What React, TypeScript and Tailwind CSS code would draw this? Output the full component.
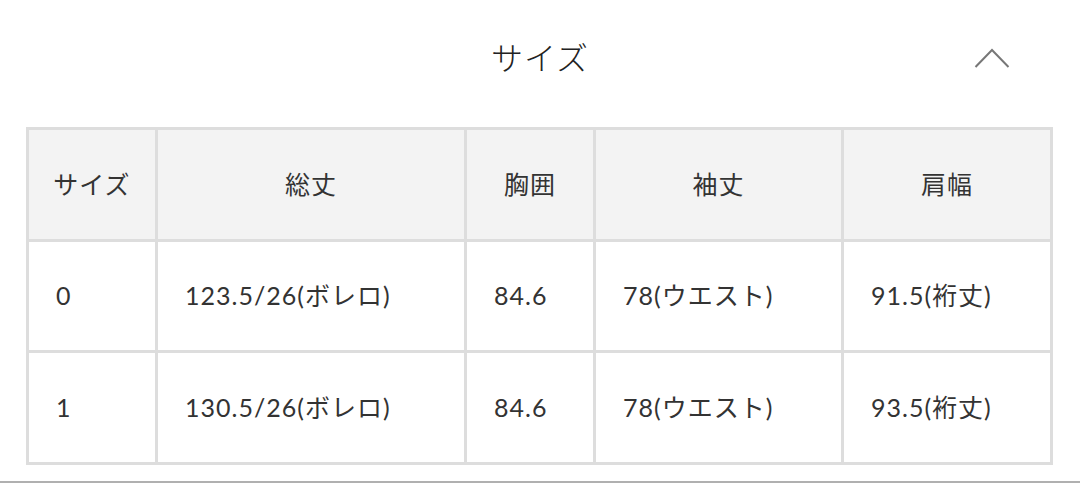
import React from "react";

const headers = ["サイズ", "総丈", "胸囲", "袖丈", "肩幅"];
const rows = [
  ["0", "123.5/26(ボレロ)", "84.6", "78(ウエスト)", "91.5(裄丈)"],
  ["1", "130.5/26(ボレロ)", "84.6", "78(ウエスト)", "93.5(裄丈)"],
];

export default function App() {
  return (
    <div
      className="w-[1080px] h-[483px] bg-white flex flex-col text-[#333]"
      style={{ fontFamily: 'Lato, "Noto Sans CJK JP", sans-serif' }}
    >
      <div className="grid grid-cols-[1fr_auto_1fr] items-center h-[116px]">
        <div />
        <div className="text-[32px] font-light leading-none text-[#222] tracking-[1px]">サイズ</div>
        <div className="flex justify-end pr-[70px]">
          <svg width="36" height="22" viewBox="0 0 36 22" fill="none">
            <path d="M1.5 20 L18 3 L34.5 20" stroke="#777" strokeWidth="2" />
          </svg>
        </div>
      </div>
      <div className="mt-[11px] mx-[26px] bg-[#dddddd] p-[3px] grid grid-cols-[126px_306px_126px_245px_206px] grid-rows-[109px_108px_109px] gap-[3px] w-[1027px]">
        {headers.map((h) => (
          <div key={h} className="bg-[#f3f3f3] flex items-center justify-center text-[25px] tracking-[1px]">
            {h}
          </div>
        ))}
        {rows.map((r, i) =>
          r.map((c, j) => (
            <div key={`${i}-${j}`} className="bg-white flex items-center pl-[27px] text-[25px] tracking-[1px]">
              {c}
            </div>
          ))
        )}
      </div>
      <div className="mt-auto h-[2px] bg-[#b0b0b0]" />
    </div>
  );
}
